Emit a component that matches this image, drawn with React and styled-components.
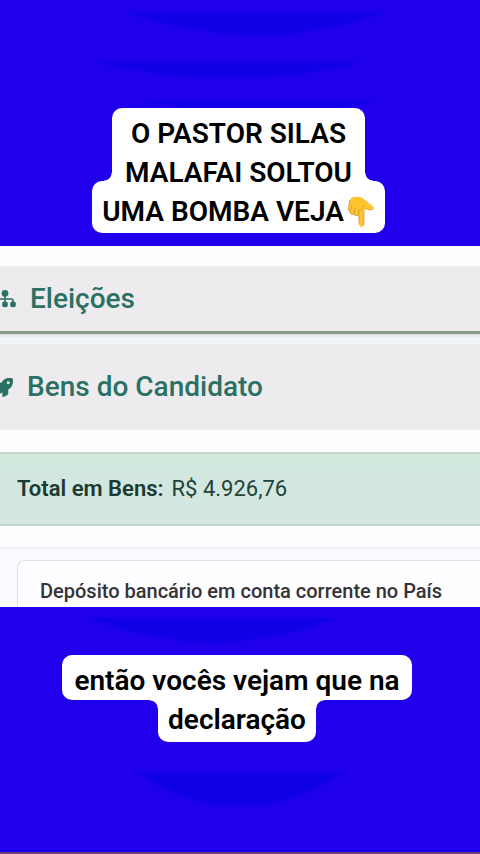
import React from "react";
import styled, { createGlobalStyle } from "styled-components";
import { FaRocket } from "react-icons/fa";

const blue = "#2000ec";
const shade = "#0f00e8";
const green = "#2a7164";

const GlobalStyle = createGlobalStyle`
  * {
    box-sizing: border-box;
  }
  body {
    margin: 0;
    background: ${blue};
    font-family: Roboto, "Liberation Sans", sans-serif;
  }
`;

const Master = styled.main`
  display: flex;
  flex-direction: column;
  min-height: 100vh;
  overflow: hidden;
  background: ${blue};
  border-bottom: 2px solid #6b3f78;
`;

const Band = styled.section`
  position: relative;
  display: flex;
  flex-direction: column;
  align-items: center;
  flex-grow: ${(p) => (p.$grow ? 1 : 0)};
  padding: ${(p) => p.$pad};
`;

const Waves = styled.svg`
  position: absolute;
  top: 0;
  left: 0;
  width: 100%;
  height: 246px;
  filter: blur(1px);
`;

const Caption = styled.p`
  position: relative;
  display: flex;
  flex-direction: column;
  align-items: center;
  margin: 0;
  color: #000;
  font-size: 28px;
  font-weight: 600;
  line-height: 39px;
  text-align: center;
  white-space: nowrap;
`;

const Plate = styled.span`
  display: block;
  background: #fff;
  border-radius: 10px;
`;

// the narrow plate carries the two concave corners that join it to the wide one
const NarrowPlate = styled(Plate)`
  position: relative;
  padding: ${(p) => (p.$above ? "6px 13px 0" : "0 10px 3px")};
  border-radius: ${(p) => (p.$above ? "10px 10px 0 0" : "0 0 10px 10px")};

  &::before,
  &::after {
    content: "";
    position: absolute;
    ${(p) => (p.$above ? "bottom: 11px" : "top: 0")};
    width: 8px;
    height: 8px;
  }
  &::before {
    right: 100%;
    background: radial-gradient(
      circle at 0 ${(p) => (p.$above ? "0" : "100%")},
      transparent 7px,
      #fff 8px
    );
  }
  &::after {
    left: 100%;
    background: radial-gradient(
      circle at 100% ${(p) => (p.$above ? "0" : "100%")},
      transparent 7px,
      #fff 8px
    );
  }
`;

const WidePlate = styled(Plate)`
  margin-top: ${(p) => (p.$below ? "-11px" : "0")};
  padding: ${(p) => (p.$below ? "11px 10px 2px" : "6px 12px 0")};
`;

const Hand = styled.svg`
  width: 28px;
  height: 32px;
  margin-left: 3px;
  vertical-align: -7px;
`;

const Sheet = styled.section`
  display: flex;
  flex-direction: column;
  height: 361px;
  padding-top: 20px;
  overflow: hidden;
  background: #fefdff;
`;

const Heading = styled.h2`
  display: flex;
  flex-shrink: 0;
  align-items: center;
  gap: 14px;
  height: ${(p) => p.$height};
  margin: 0;
  background: #edebee;
  color: ${green};
  font-size: 28px;
  font-weight: 500;
  line-height: 32px;

  svg {
    flex-shrink: 0;
    margin-left: -6px;
  }
`;

const Rule = styled.hr`
  flex-shrink: 0;
  width: 100%;
  height: 13px;
  margin: 0;
  border: 0;
  border-top: 3px solid #899b82;
  background: linear-gradient(#d9dde3, #f3f5f9 4px);
`;

const Total = styled.p`
  display: flex;
  flex-shrink: 0;
  align-items: center;
  gap: 8px;
  height: 74px;
  margin: 22px 0 21px;
  padding: 0 17px;
  background: linear-gradient(#cfe9db, #d1e7df 20px);
  border-top: 2px solid #c6d8d1;
  border-bottom: 2px solid #c1d5ce;
  color: #24423a;
  font-size: 22px;
  line-height: 28px;

  strong {
    color: #1c3a32;
    font-weight: 600;
  }
`;

const Assets = styled.div`
  flex: 1;
  padding: 11px 0 0 17px;
  border-top: 2px solid #f0eef1;
  background: #fcfaff;
`;

const Asset = styled.article`
  padding: 18px 22px;
  background: #fefdff;
  border: 1px solid #e2e0e5;
  border-right: 0;
  border-bottom: 0;
  border-radius: 8px 0 0 0;
`;

const AssetTitle = styled.h3`
  margin: 0;
  color: #343338;
  font-size: 20px;
  font-weight: 500;
  line-height: 24px;
  white-space: nowrap;
`;

const PointingDown = () => (
  <Hand viewBox="0 0 30 32" preserveAspectRatio="none" role="img" aria-label="👇">
    <path
      d="M5 1.5 C8 .4 14 .6 17 2.2 L28 10.5 C30 12.3 28.5 14.3 26 14 L19.5 12.8 L18.2 15 L18 28.5 C18 31.8 13.4 31.8 13.2 28.5 L12.6 18.7 C10.5 20.3 8.3 19.9 7.6 18.2 C5 19 3 17.5 3 15.5 C1 14.5 1.2 12 2 10 L3.2 4 Z"
      fill="#fcc52d"
    />
    <path
      d="M13.2 28.5 L12.6 18.7 C10.5 20.3 8.3 19.9 7.6 18.2 C5 19 3 17.5 3 15.5 C1 14.5 1.2 12 2 10 L3.2 4"
      fill="none"
      stroke="#dd9c37"
      strokeWidth="1"
    />
    <path
      d="M3.4 15.2 L5.2 10 M7.8 18 L8.6 12 M12.6 18.6 L12.8 14.5 M12.8 14.8 C16 14 17 12 17.4 9.5 M19.5 12.8 L26 14 M18.2 15 L18 28.5"
      fill="none"
      stroke="#df9f38"
      strokeWidth="1"
      strokeLinecap="round"
    />
  </Hand>
);

const Tree = () => (
  <svg width="22" height="18" viewBox="0 0 22 18" fill="currentColor" aria-hidden="true">
    <circle cx="11" cy="3.4" r="3.3" />
    <path
      d="M11 6 V13 M3 13 V10.5 Q3 9 4.500 9 H17.500 Q19 9 19 10.500 V13"
      fill="none"
      stroke="currentColor"
      strokeWidth="1.6"
    />
    <rect x="0.200" y="11.600" width="5.600" height="5.600" rx="2" />
    <rect x="8.200" y="11.600" width="5.600" height="5.600" rx="2" />
    <rect x="16.200" y="11.600" width="5.600" height="5.600" rx="2" />
  </svg>
);

const App = () => (
  <>
    <GlobalStyle />
    <Master>
      <Band $pad="108px 3px 13px 0">
        <Waves viewBox="0 0 480 246" preserveAspectRatio="none" aria-hidden="true">
          <g fill={shade}>
            <path d="M125 12 H385 Q260 58 125 12 Z" />
            <path d="M95 62 H362 Q235 95 95 62 Z" />
            <path d="M140 100 H380 Q260 125 140 100 Z" />
          </g>
        </Waves>
        <Caption>
          <NarrowPlate $above>
            O PASTOR SILAS
            <br />
            MALAFAI SOLTOU
          </NarrowPlate>
          <WidePlate $below>
            UMA BOMBA VEJA
            <PointingDown />
          </WidePlate>
        </Caption>
      </Band>

      <Sheet>
        <Heading $height="65px">
          <Tree />
          Eleições
        </Heading>
        <Rule />
        <Heading $height="86px">
          <FaRocket size={19} />
          Bens do Candidato
        </Heading>
        <Total>
          <strong>Total em Bens:</strong>
          <span>R$ 4.926,76</span>
        </Total>
        <Assets>
          <Asset>
            <AssetTitle>Depósito bancário em conta corrente no País</AssetTitle>
          </Asset>
        </Assets>
      </Sheet>

      <Band $grow $pad="48px 6px 0 0">
        <Waves viewBox="0 0 480 246" preserveAspectRatio="none" aria-hidden="true">
          <g fill={shade}>
            <path d="M88 11 H335 Q215 60 88 11 Z" />
            <path d="M135 165 H345 Q240 235 135 165 Z" />
          </g>
        </Waves>
        <Caption>
          <WidePlate>então vocês vejam que na</WidePlate>
          <NarrowPlate>declaração</NarrowPlate>
        </Caption>
      </Band>
    </Master>
  </>
);

export default App;
